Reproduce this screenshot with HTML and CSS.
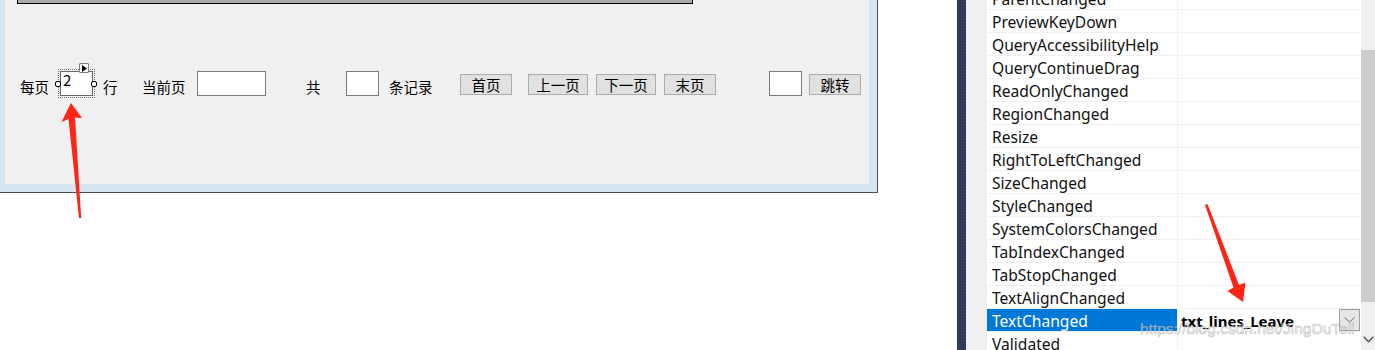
FILE: index.html
```html
<!DOCTYPE html>
<html lang="zh-CN">
<head>
<meta charset="utf-8">
<title>分页控件设计器</title>
<link rel="stylesheet" href="styles.css">
</head>
<body>
<div class="screen">
  <div class="designer">
    <div class="form">
      <div class="form-client">
        <div class="grid-bar"></div>
        <div class="pager">
          <span class="lbl w2 m-meiye">每页</span>
          <div class="tb w-s selected m-tb1"><span class="tb-text">2</span>
            <span class="handle h-left"></span><span class="handle h-right"></span>
            <span class="smart-tag"><svg width="5" height="7" viewBox="0 0 5 7"><path d="M0 0 L5 3.5 L0 7 Z" fill="#000"/></svg></span>
          </div>
          <span class="lbl w1 m-hang">行</span>
          <span class="lbl w3 m-cur">当前页</span>
          <div class="tb w-m m-tb2"></div>
          <span class="lbl w1 m-gong">共</span>
          <div class="tb w-s m-tb3"></div>
          <span class="lbl w3 m-rec">条记录</span>
          <button class="btn w-b2 m-first">首页</button>
          <button class="btn w-b3 m-prev">上一页</button>
          <button class="btn w-b3 m-next">下一页</button>
          <button class="btn w-b2 m-last">末页</button>
          <div class="tb w-s m-tb4"></div>
          <button class="btn w-b2 m-go">跳转</button>
        </div>
      </div>
    </div>
  </div>
  <div class="props">
    <div class="strip"></div>
    <div class="gutter"></div>
    <div class="prop-grid">
      <div class="rows">
        <div class="row"><div class="name">ParentChanged</div><div class="val"></div></div>
        <div class="row"><div class="name">PreviewKeyDown</div><div class="val"></div></div>
        <div class="row"><div class="name">QueryAccessibilityHelp</div><div class="val"></div></div>
        <div class="row"><div class="name">QueryContinueDrag</div><div class="val"></div></div>
        <div class="row"><div class="name">ReadOnlyChanged</div><div class="val"></div></div>
        <div class="row"><div class="name">RegionChanged</div><div class="val"></div></div>
        <div class="row"><div class="name">Resize</div><div class="val"></div></div>
        <div class="row"><div class="name">RightToLeftChanged</div><div class="val"></div></div>
        <div class="row"><div class="name">SizeChanged</div><div class="val"></div></div>
        <div class="row"><div class="name">StyleChanged</div><div class="val"></div></div>
        <div class="row"><div class="name">SystemColorsChanged</div><div class="val"></div></div>
        <div class="row"><div class="name">TabIndexChanged</div><div class="val"></div></div>
        <div class="row"><div class="name">TabStopChanged</div><div class="val"></div></div>
        <div class="row"><div class="name">TextAlignChanged</div><div class="val"></div></div>
        <div class="row active"><div class="name">TextChanged</div><div class="val"><span class="val-text">txt_lines_Leave</span><span class="drop"><svg width="11" height="6" viewBox="0 0 11 6"><path d="M0.5 0.5 L5.5 5 L10.5 0.5" fill="none" stroke="#6a6a6a" stroke-width="1"/></svg></span></div></div>
        <div class="row"><div class="name">Validated</div><div class="val"></div></div>
      </div>
    </div>
    <div class="vscroll">
      <div class="track-top"></div>
      <div class="thumb"></div>
      <div class="track-bottom"><svg width="11" height="7" viewBox="0 0 11 7"><path d="M0.7 0.7 L5.5 5.8 L10.3 0.7" fill="none" stroke="#505050" stroke-width="1.4"/></svg></div>
    </div>
  </div>
  <div class="watermark">https://blog.csdn.net/JingDuTell</div>
  <svg class="arrows" width="1375" height="350" viewBox="0 0 1375 350">
    <path d="M71 103 L82 118 L75 117.5 L81.2 218 L79 218 L68.5 119 L61.5 122 Z" fill="#ff2416"/>
    <path d="M1205 205 L1207.5 204 L1239 285 L1245.5 282.5 L1243 302 L1227.5 291 L1233.5 287.5 Z" fill="#ff2416"/>
  </svg>
</div>
</body>
</html>
```
FILE: styles.css
```css
* { box-sizing: border-box; }
html, body { margin: 0; padding: 0; background: #fff; }
.screen {
  position: relative;
  width: 1375px;
  height: 350px;
  overflow: hidden;
  display: flex;
  font-family: "Noto Sans CJK SC", "Noto Sans", sans-serif;
}
.designer { width: 957px; flex: none; }
.form {
  width: 878px;
  height: 193px;
  background: #d7e4f2;
  border-right: 1px solid #4d4d4d;
  border-bottom: 1px solid #4d4d4d;
  padding-left: 5px;
}
.form-client {
  width: 864px;
  height: 184px;
  background: #f0f0f0;
  padding-top: 0;
}
.grid-bar {
  margin-left: 12px;
  width: 676px;
  height: 4px;
  background: #ababab;
  border: 1px solid #000;
  border-top: none;
}
.pager {
  display: flex;
  align-items: flex-start;
  margin-top: 67px;
  height: 25px;
  font-size: 14.5px;
  color: #000;
}
.lbl {
  display: block;
  flex: none;
  line-height: 16px;
  margin-top: 8px;
  white-space: nowrap;
}
.w1 { width: 14px; }
.w2 { width: 30px; }
.w3 { width: 44px; }
.tb {
  flex: none;
  position: relative;
  height: 25px;
  background: #fff;
  border: 1px solid #7a7a7a;
}
.w-s { width: 33px; }
.w-m { width: 69px; }
.tb-text {
  display: block;
  padding-left: 2px;
  font-size: 15px;
  line-height: 16px;
}
.selected { border-color: #6a6a6a; }
.selected::before {
  content: "";
  position: absolute;
  left: -3px; top: -3px; right: -3px; bottom: -3px;
  border: 1px dotted #707070;
}
.handle {
  position: absolute;
  top: 9px;
  width: 6px;
  height: 6px;
  background: #fff;
  border: 1px solid #000;
  border-radius: 2px;
}
.h-left { left: -6px; }
.h-right { left: 30px; }
.smart-tag {
  position: absolute;
  left: 18px;
  top: -9px;
  width: 10px;
  height: 10px;
  background: #fff;
  border: 1px solid #808080;
  border-radius: 1px;
  display: flex;
  align-items: center;
  justify-content: center;
}
.smart-tag svg { display: block; margin-left: 1px; }
.btn {
  flex: none;
  margin-top: 3px;
  height: 21px;
  padding: 0;
  background: #e1e1e1;
  border: 1px solid #adadad;
  font-family: inherit;
  font-size: 14.5px;
  line-height: 19px;
  color: #000;
  text-align: center;
}
.w-b2 { width: 52px; }
.w-b3 { width: 60px; }
.m-meiye { margin-left: 15px; }
.m-tb1 { margin-left: 10px; }
.m-hang { margin-left: 10px; }
.m-cur { margin-left: 25px; }
.m-tb2 { margin-left: 11px; }
.m-gong { margin-left: 40px; }
.m-tb3 { margin-left: 26px; }
.m-rec { margin-left: 10px; }
.m-first { margin-left: 27px; }
.m-prev { margin-left: 16px; }
.m-next { margin-left: 8px; }
.m-last { margin-left: 8px; }
.m-tb4 { margin-left: 53px; }
.m-go { margin-left: 7px; }

/* property grid */
.props {
  display: flex;
  flex: none;
  width: 418px;
  height: 350px;
}
.strip {
  width: 9px;
  flex: none;
  background-color: #2e3a55;
  background-image: radial-gradient(#3e4a66 0.6px, transparent 0.8px);
  background-size: 3px 3px;
}
.gutter { width: 21px; flex: none; background: #f0f0f0; }
.prop-grid {
  width: 373px;
  flex: none;
  overflow: hidden;
  background: #fff;
}
.rows { margin-top: -13px; }
.row {
  display: flex;
  height: 23px;
  border-bottom: 1px solid #f0f0f0;
  font-family: "Noto Sans", sans-serif;
  font-size: 15.6px;
  color: #111;
}
.name {
  width: 191px;
  flex: none;
  border-right: 1px solid #f0f0f0;
  padding-left: 5px;
  line-height: 22px;
  padding-top: 1px;
  white-space: nowrap;
}
.val {
  width: 182px;
  flex: none;
  display: flex;
  align-items: stretch;
}
.active .name { background: #0078d7; color: #fff; }
.val-text {
  padding-left: 3px;
  padding-top: 1px;
  line-height: 22px;
  font-size: 15px;
  font-weight: bold;
  color: #000;
}
.drop {
  margin-left: auto;
  width: 21px;
  background: #e6e6e6;
  border: 1px solid #a0a0a0;
  display: flex;
  align-items: center;
  justify-content: center;
}
.drop svg { display: block; }
.vscroll {
  width: 15px;
  flex: none;
  display: flex;
  flex-direction: column;
  background: #f0f0f0;
  margin-left: 1px;
}
.track-top { height: 50px; flex: none; }
.thumb { height: 252px; flex: none; background: #cdcdcd; }
.track-bottom {
  flex: 1;
  display: flex;
  align-items: flex-end;
  justify-content: center;
  padding-bottom: 7px;
}
.track-bottom svg { display: block; }
.watermark {
  position: absolute;
  left: 1140px;
  top: 319px;
  font-family: "Liberation Sans", Arial, sans-serif;
  font-size: 15.5px;
  line-height: 20px;
  color: rgba(240, 240, 240, 0.55);
  -webkit-text-stroke: 0.6px rgba(150, 150, 150, 0.55);
  white-space: nowrap;
  pointer-events: none;
}
.arrows {
  position: absolute;
  left: 0;
  top: 0;
  pointer-events: none;
}
```
